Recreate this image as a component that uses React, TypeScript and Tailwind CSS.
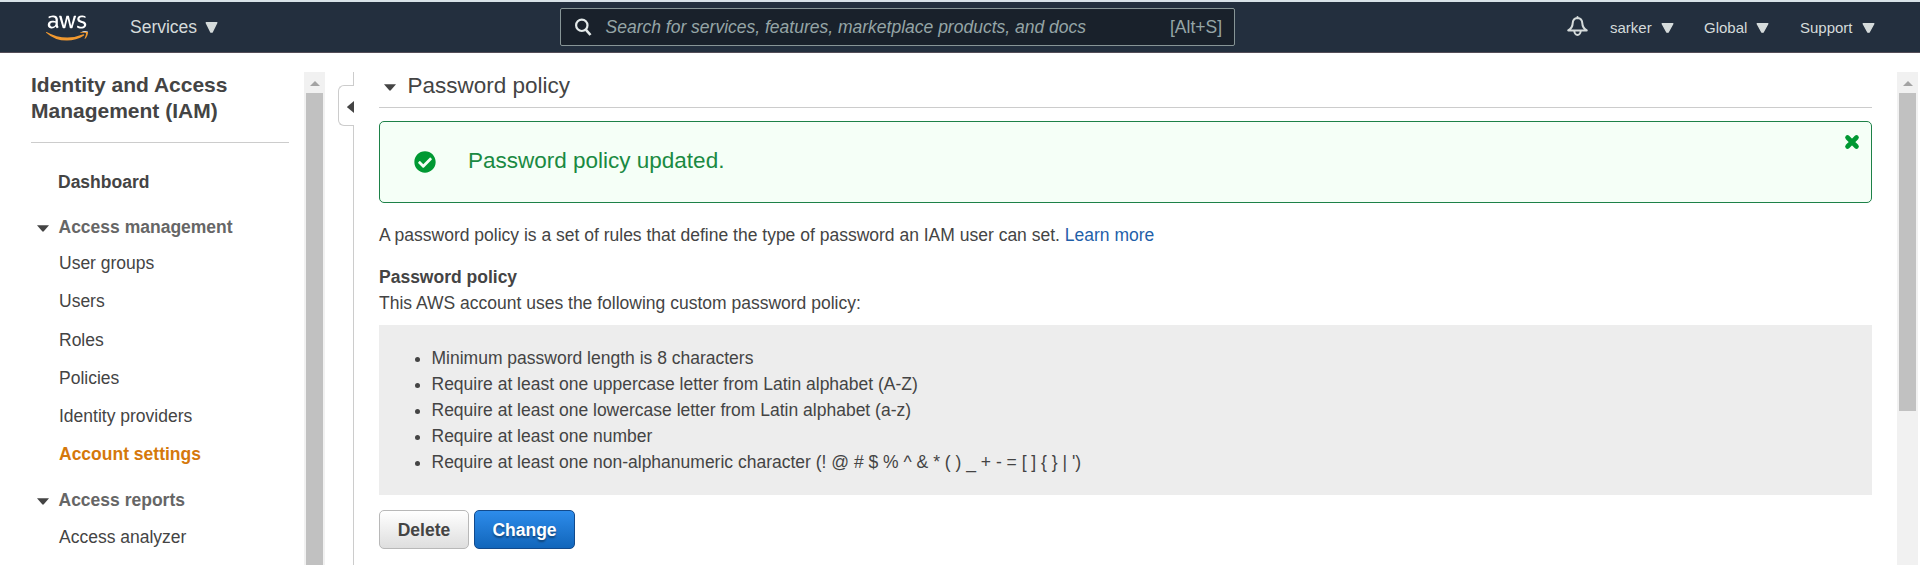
import React from "react";
import { FaAws, FaCheckCircle } from "react-icons/fa";

function Caret({ className }: { className: string }) {
  return (
    <svg viewBox="0 0 13 11" preserveAspectRatio="none" className={`shrink-0 ${className}`}>
      <path d="M1.200 .8h10.600L7.100 10.100H5.900z" fill="currentColor" stroke="currentColor" strokeWidth="1.400" strokeLinejoin="round" />
    </svg>
  );
}

function Disclosure() {
  return (
    <svg viewBox="0 0 12 7" className="h-[7px] w-3 shrink-0">
      <path d="M0 .3h12L6.8 6.3q-.8.7-1.6 0z" fill="#444" />
    </svg>
  );
}

function Bell() {
  return (
    <svg viewBox="0 0 20 20" className="mt-px h-[21px] w-[21px] shrink-0" fill="none" stroke="#d5dbdb" strokeWidth="1.9" strokeLinejoin="round" strokeLinecap="round">
      <path d="M10 2C7 2.200 5.500 4.500 5.400 7 5.300 10.500 4 12 1.200 13.700h17.600C16 12 14.700 10.500 14.600 7 14.500 4.500 13 2.200 10 2zM10 1V2" />
      <path d="M7 14.200a3 3.800 0 0 0 6 0" />
    </svg>
  );
}

function ScrollTop() {
  return (
    <div className="flex h-[21px] w-full justify-center bg-[#f1f1f1] pt-[9px]">
      <svg viewBox="0 0 10 5" className="h-[5px] w-2.5">
        <path d="M5 0l5 5H0z" fill="#a3a3a3" />
      </svg>
    </div>
  );
}

function Header() {
  return (
    <header className="flex h-[53px] shrink-0 items-start border-t-2 border-b border-t-[#d8e2e8] border-b-[#544e58] bg-[#232f3e] text-[#d5dbdb]">
      <svg width="0" height="0" className="absolute">
        <linearGradient id="logo" gradientUnits="userSpaceOnUse" x1="0" y1="0" x2="0" y2="512">
          <stop offset="0.605" stopColor="#fff" />
          <stop offset="0.605" stopColor="#f0982f" />
        </linearGradient>
      </svg>
      <FaAws className="mt-[9px] ml-[46px] h-[34px] w-[42px] shrink-0 [&_path]:fill-[url(#logo)]" />
      <div className="flex w-[430px] shrink-0 items-center pt-[7px] pl-[42px] text-[17.5px] leading-[36px]">
        <span>Services</span>
        <Caret className="ml-[8px] h-[11px] w-[13px]" />
      </div>
      <div className="mt-1.5 ml-[42px] flex h-[38px] w-[675px] shrink-0 items-center rounded-[2px] border border-[#879596] bg-[#19212b] pr-[12px] pl-[13px] text-[17.5px] text-[#95a5a6]">
        <svg viewBox="0 0 18 18" className="h-[18px] w-[18px] shrink-0" fill="none" stroke="#e4eaea" strokeWidth="2.2">
          <circle cx="7.800" cy="7.300" r="5.700" />
          <path d="M11.800 11.600l4.700 5.400" strokeWidth="2.600" />
        </svg>
        <span className="ml-[13.5px] italic">Search for services, features, marketplace products, and docs</span>
        <span className="ml-auto">[Alt+S]</span>
      </div>
      <nav className="ml-[332px] flex h-[50px] items-center text-[15px] leading-[18px]">
        <div className="w-[43px] pb-[3px]">
          <Bell />
        </div>
        <div className="flex w-[94px] items-center pt-px">
          sarker
          <Caret className="ml-[9px] h-2.5 w-[13px]" />
        </div>
        <div className="flex w-24 items-center pt-px">
          Global
          <Caret className="ml-[9px] h-2.5 w-[13px]" />
        </div>
        <div className="flex items-center pt-px">
          Support
          <Caret className="ml-[9px] h-2.5 w-[13px]" />
        </div>
      </nav>
    </header>
  );
}

function Group({ label }: { label: string }) {
  return (
    <div className="flex items-center pl-[5.5px]">
      <div className="w-[22px] pt-[3px]">
        <Disclosure />
      </div>
      <span className="font-bold text-[#666]">{label}</span>
    </div>
  );
}

const links = ["User groups", "Users", "Roles", "Policies", "Identity providers"];

function Sidebar() {
  return (
    <aside className="flex w-[338px] shrink-0 pl-[31px] text-[17.5px] leading-[26px]">
      <div className="w-[258px]">
        <h1 className="h-[71px] border-b border-[#ccc] text-[21px] leading-[26px] font-bold">
          Identity and Access
          <br />
          Management (IAM)
        </h1>
        <div className="mt-[26px] pl-[27px] font-bold">Dashboard</div>
        <div className="mt-[19px]">
          <Group label="Access management" />
        </div>
        <ul className="mt-[10px] flex flex-col gap-[12.3px] pl-7">
          {links.map((label) => (
            <li key={label}>{label}</li>
          ))}
          <li className="font-bold text-[#d5780b]">Account settings</li>
        </ul>
        <div className="mt-5">
          <Group label="Access reports" />
        </div>
        <div className="mt-[11px] pl-7">Access analyzer</div>
      </div>
      <div className="ml-[15px] flex h-[493px] w-[21px] flex-col bg-[#f1f1f1]">
        <ScrollTop />
        <div className="mr-0.5 ml-0.5 flex-1 bg-[#c1c1c1]" />
      </div>
    </aside>
  );
}

function CollapseRail() {
  return (
    <div className="flex w-4 shrink-0 flex-col">
      <div className="h-[13px] border-r border-[#ccc]" />
      <div className="flex h-[41px] items-center justify-end rounded-l-[6px] border border-r-0 border-[#ccc]">
        <svg viewBox="0 0 7 12" className="mt-0.5 h-3 w-[7px]">
          <path d="M7 0v12L.4 6.600Q0 6 .4 5.400z" fill="#444" />
        </svg>
      </div>
      <div className="flex-1 border-r border-[#ccc]" />
    </div>
  );
}

const rules = [
  "Minimum password length is 8 characters",
  "Require at least one uppercase letter from Latin alphabet (A-Z)",
  "Require at least one lowercase letter from Latin alphabet (a-z)",
  "Require at least one number",
  "Require at least one non-alphanumeric character (! @ # $ % ^ & * ( ) _ + - = [ ] { } | ')",
];

function Content() {
  return (
    <main className="ml-[25px] w-[1493px] shrink-0 text-[17.5px] leading-[26px]">
      <div className="flex h-9 items-start border-b border-[#ccc] pl-[5px]">
        <div className="flex h-[31px] w-6 items-center">
          <Disclosure />
        </div>
        <h2 className="-ml-[0.5px] text-[22.5px] leading-[28px]">Password policy</h2>
      </div>
      <div className="mt-[13px] flex h-[82px] items-start rounded-[5px] border border-[#1d8148] bg-[#f5fff7] pr-[11px] pl-[34px]">
        <FaCheckCircle className="mt-[28.5px] h-[22px] w-[22px] text-[#093]" />
        <span className="mt-[23px] ml-[32px] text-[22.5px] leading-[32px] text-[#1a8a42]">Password policy updated.</span>
        <svg viewBox="0 0 16 16" className="mt-[12px] ml-auto h-4 w-4">
          <path d="M3.500 3.500l9 9M12.500 3.500l-9 9" stroke="#093" strokeWidth="4.600" strokeLinecap="round" />
        </svg>
      </div>
      <p className="mt-[19px]">
        A password policy is a set of rules that define the type of password an IAM user can set. <a className="text-[#1f5fa9]">Learn more</a>
      </p>
      <h3 className="mt-4 font-bold">Password policy</h3>
      <p>This AWS account uses the following custom password policy:</p>
      <ul className="mt-[9px] h-[170px] list-disc bg-[#ededed] pt-5 pl-[52.5px]">
        {rules.map((rule) => (
          <li key={rule}>{rule}</li>
        ))}
      </ul>
      <div className="mt-[15px] flex gap-[5px] font-bold">
        <button className="h-[39px] w-[90px] rounded-[5px] border border-[#b8b8b8] bg-linear-to-b from-white to-[#dedede]">Delete</button>
        <button className="h-[39px] w-[101px] rounded-[5px] border border-[#124a8c] bg-linear-to-b from-[#2d8ceb] to-[#1166bb] text-white [text-shadow:0_2px_2px_#0006]">
          Change
        </button>
      </div>
    </main>
  );
}

export default function App() {
  return (
    <div className="flex h-[565px] w-[1920px] flex-col overflow-hidden bg-white font-['Liberation_Sans',Arial,sans-serif] text-[#444]">
      <Header />
      <div className="flex min-h-0 flex-1 pt-[19px]">
        <Sidebar />
        <CollapseRail />
        <Content />
        <div className="ml-[25px] h-[493px] w-[21px] shrink-0 bg-[#f1f1f1]">
          <ScrollTop />
          <div className="mx-0.5 h-[318px] bg-[#c1c1c1]" />
        </div>
      </div>
    </div>
  );
}
